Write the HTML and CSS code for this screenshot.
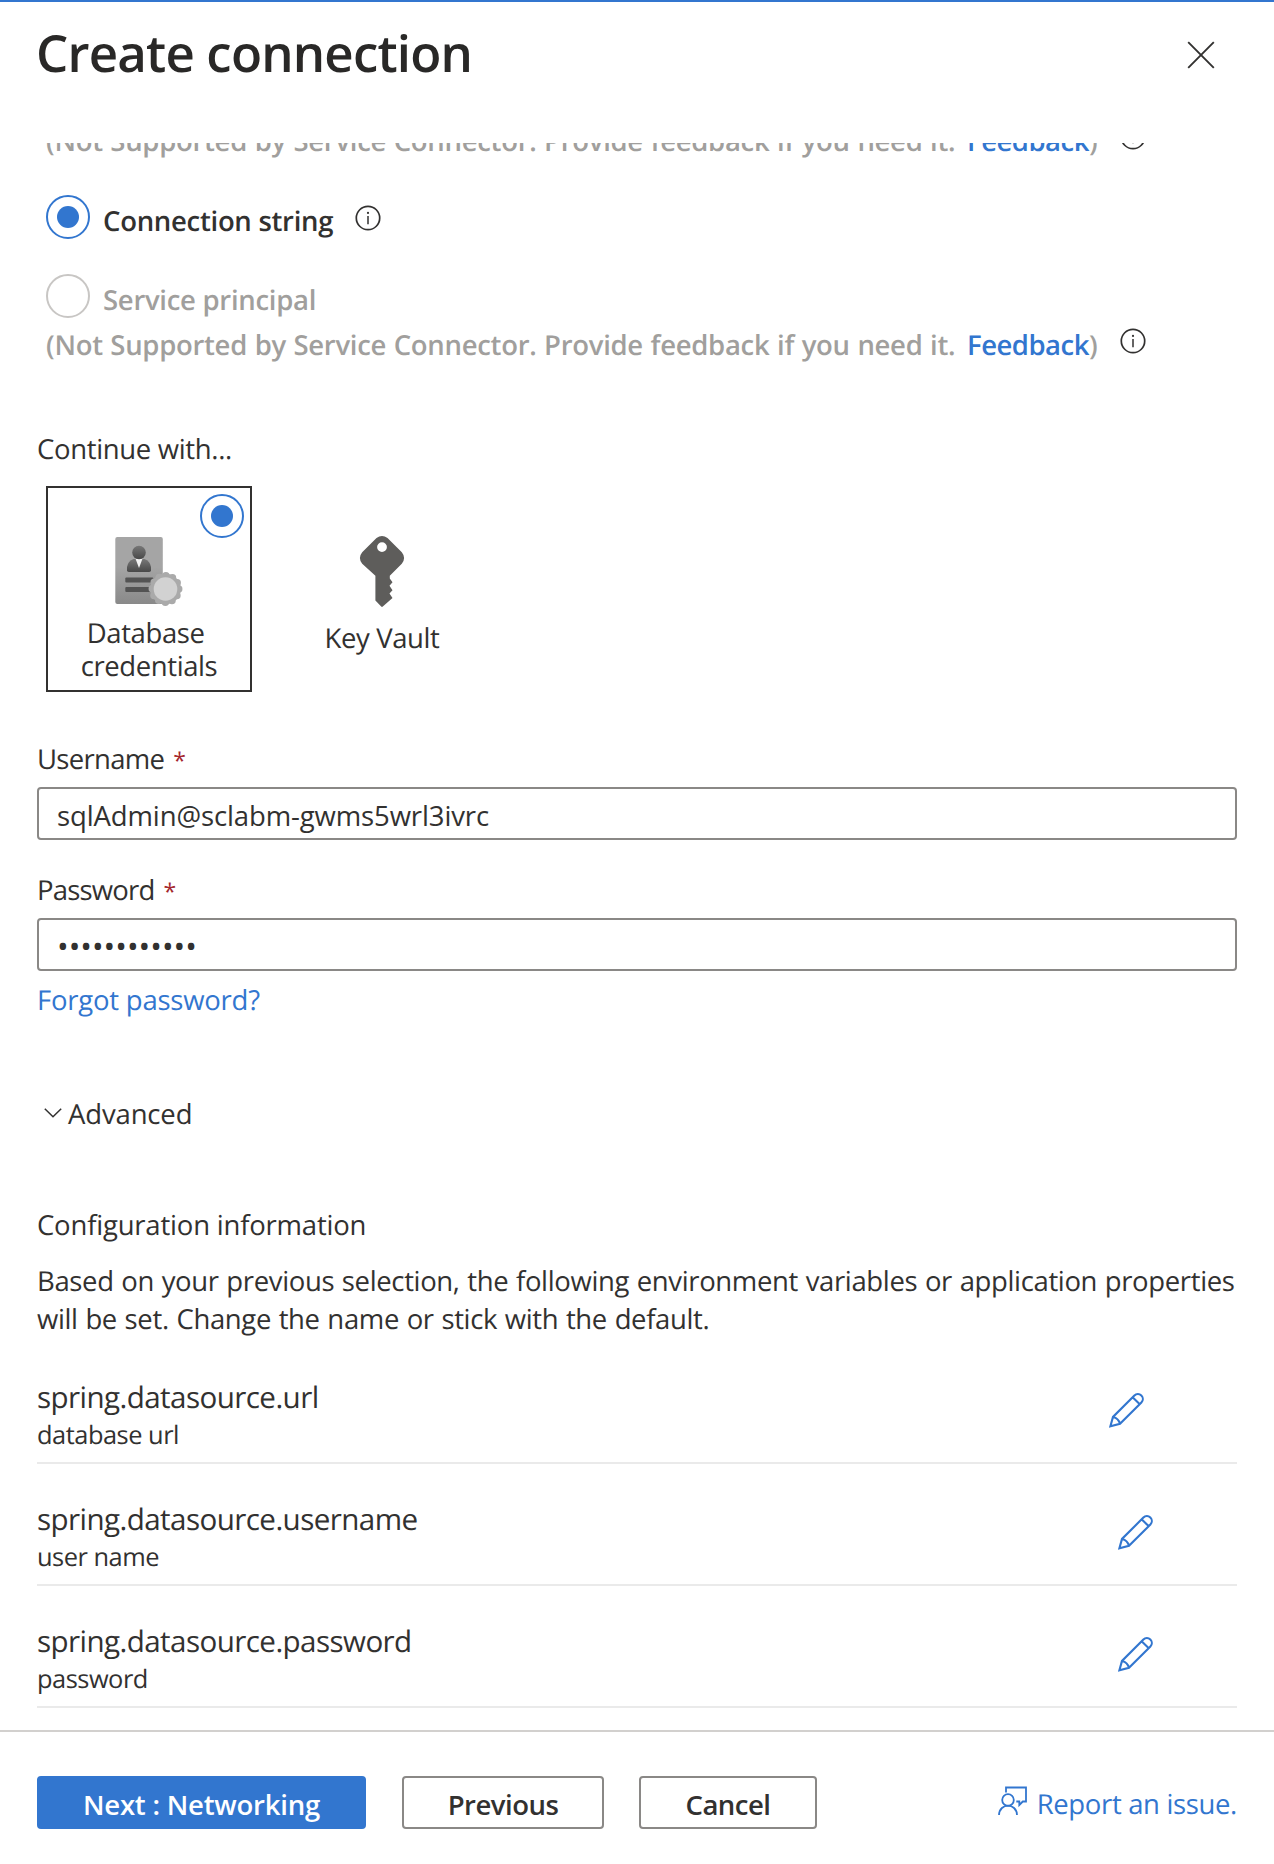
FILE: index.html
```html
<!DOCTYPE html>
<html lang="en">
<head>
<meta charset="utf-8">
<title>Create connection</title>
<link rel="stylesheet" href="styles.css">
</head>
<body>
<svg class="defs" width="0" height="0" aria-hidden="true">
  <symbol id="info" viewBox="0 0 26 26">
    <circle cx="13" cy="13" r="11.7" fill="none" stroke="#323130" stroke-width="1.7"/>
    <path d="M13 11v8.2" stroke="#323130" stroke-width="1.5"/>
    <circle cx="13" cy="7.9" r="1.1" fill="#323130"/>
  </symbol>
  <symbol id="pencil" viewBox="0 0 36 36">
    <path d="M1.4 34.2 4 24.9 25.4 3.6A4.9 4.9 0 0 1 32.4 10.5L11 31.8ZM23.6 5.3 30.8 12.3M4 24.9Q9.600 26.2 11 31.8" fill="none" stroke="#3276cf" stroke-width="2.1"/>
  </symbol>
</svg>

<div class="panel">
  <header class="header">
    <h1 class="title">Create connection</h1>
    <svg class="close" width="28" height="28" viewBox="0 0 28 28"><path d="M1.200 1.200 26.800 26.800M26.800 1.200 1.200 26.800" stroke="#323130" stroke-width="1.9"/></svg>
  </header>

  <main class="content">
    <div class="note note-first">
      <span class="note-text">(Not Supported by Service Connector. Provide feedback if you need it.</span>
      <a class="note-link">Feedback</a><span>)</span>
      <svg class="info" width="26" height="26"><use href="#info"/></svg>
    </div>

    <div class="option option-first">
      <span class="radio radio-on"></span>
      <span class="option-label">Connection string</span>
      <svg class="info" width="26" height="26"><use href="#info"/></svg>
    </div>

    <div class="option option-disabled">
      <span class="radio"></span>
      <span class="option-label">Service principal</span>
    </div>
    <div class="note">
      <span class="note-text">(Not Supported by Service Connector. Provide feedback if you need it.</span>
      <a class="note-link">Feedback</a><span>)</span>
      <svg class="info" width="26" height="26"><use href="#info"/></svg>
    </div>

    <p class="label continue">Continue with...</p>
    <div class="tiles">
      <div class="tile tile-on">
        <span class="radio radio-on tile-radio"></span>
        <svg class="tile-icon" width="70" height="70" viewBox="0 0 70 70">
          <defs>
            <linearGradient id="page" x2="0" y2="1"><stop offset=".45" stop-color="#a5a5a5"/><stop offset="1" stop-color="#898989"/></linearGradient>
            <linearGradient id="head" x2="0" y2="1"><stop stop-color="#777"/><stop offset="1" stop-color="#484848"/></linearGradient>
          </defs>
          <rect x="1.300" y="1" width="47.500" height="67" rx="2" fill="url(#page)"/>
          <path d="M13 34.200V31Q14 25 19.500 23H30.500Q36 25 37 31V34.200Q37 36 35.200 36H14.800Q13 36 13 34.200Z" fill="url(#head)"/>
          <path d="M21.600 23H28.400L25 32Z" fill="#f2f2f2"/>
          <circle cx="25" cy="16.500" r="6.800" fill="url(#head)"/>
          <rect x="11.300" y="41.500" width="28" height="5" rx="1" fill="#535353"/>
          <rect x="11.300" y="51" width="26" height="5" rx="1" fill="#535353"/>
          <circle cx="51.500" cy="53" r="15.300" fill="#aaa"/>
          <circle cx="51.500" cy="53" r="13.200" fill="none" stroke="#aaa" stroke-width="7.500" stroke-linecap="round" stroke-dasharray="0 6.911"/>
          <circle cx="51.500" cy="53" r="11.800" fill="#d2d2d2"/>
        </svg>
        <span class="tile-label">Database&nbsp;<br>credentials</span>
      </div>
      <div class="tile">
        <svg class="tile-icon key" width="48" height="74" viewBox="0 0 48 74">
          <path fill="#5e5d5b" fill-rule="evenodd" d="M18.500 4Q24-.2 29.500 4L43.800 18.300Q48.400 24 43.800 29.700L31.800 41.700V44.500L34.500 48.300 31.500 51.800 34.500 56.200 31.500 59.500 34.500 64 24.800 72.600Q24 73.200 23.200 72.600L17.400 66.500V41.700L4.200 29.700Q-.4 24 4.200 18.300ZM24 8.200A4.900 4.900 0 1 0 24 18 4.900 4.900 0 1 0 24 8.200Z"/>
        </svg>
        <span class="tile-label">Key Vault</span>
      </div>
    </div>

    <label class="label username-label">Username<span class="required">*</span></label>
    <input class="input" type="text" value="sqlAdmin@sclabm-gwms5wrl3ivrc">
    <label class="label password-label">Password<span class="required">*</span></label>
    <input class="input input-password" type="password" value="connectordb1">
    <a class="label forgot">Forgot password?</a>

    <div class="advanced">
      <svg width="18" height="10" viewBox="0 0 18 10"><path d="M.8.8 9 8.800 17.200.8" fill="none" stroke="#323130" stroke-width="1.500"/></svg>
      <span>Advanced</span>
    </div>

    <p class="label config">Configuration information</p>
    <p class="label description">Based on your previous selection, the following environment variables or application properties<br>will be set. Change the name or stick with the default.</p>

    <ul class="variables">
      <li class="variable">
        <div><div class="variable-name">spring.datasource.url</div><div class="variable-hint">database url</div></div>
        <svg class="edit edit-wide" width="36" height="36"><use href="#pencil"/></svg>
      </li>
      <li class="variable">
        <div><div class="variable-name">spring.datasource.username</div><div class="variable-hint">user name</div></div>
        <svg class="edit" width="36" height="36"><use href="#pencil"/></svg>
      </li>
      <li class="variable">
        <div><div class="variable-name">spring.datasource.password</div><div class="variable-hint">password</div></div>
        <svg class="edit" width="36" height="36"><use href="#pencil"/></svg>
      </li>
    </ul>
  </main>

  <footer class="footer">
    <button class="button button-primary">Next : Networking</button>
    <button class="button button-previous">Previous</button>
    <button class="button button-cancel">Cancel</button>
    <a class="report">
      <svg width="30" height="30" viewBox="0 0 30 30" fill="none" stroke="#3276cf" stroke-width="1.800"><circle cx="10" cy="14" r="5.800"/><path d="M1 29C1.500 16.500 18.500 16.500 19 29M8 6.500V1.500H28V15.500H24.800L21.300 19V15.500H18.300"/></svg>
      <span>Report an issue.</span>
    </a>
  </footer>
</div>
</body>
</html>
```
FILE: styles.css
```css
* { box-sizing: border-box; }

body {
  margin: 0;
  background: #fff;
  color: #323130;
  font: 27.5px/38px "Open Sans", "Noto Sans", sans-serif;
  letter-spacing: -0.23px;
  text-rendering: geometricPrecision;
}

p, h1, ul { margin: 0; padding: 0; }
svg { display: block; flex: none; }
.defs { position: absolute; }

.panel {
  display: flex;
  flex-direction: column;
  height: 1864px;
  border-top: 2px solid #3276cf;
}

.header {
  display: flex;
  justify-content: space-between;
  height: 141px;
  padding: 15px 59px 0 36px;
}
.title {
  font-size: 51px;
  font-weight: 600;
  line-height: 70px;
  letter-spacing: -0.82px;
  color: #292827;
}
.close { margin-top: 24px; }

.content {
  height: 1587px;
  padding: 0 37px;
  overflow: hidden;
}

.note {
  display: flex;
  height: 38px;
  margin-top: 9px;
  padding-left: 9px;
  color: #a19f9d;
  font-weight: 600;
  white-space: nowrap;
  letter-spacing: -0.5px;
}
.note-first { margin-top: -20px; }
.note-text { width: 921px; letter-spacing: -0.3px; word-spacing: 0.8px; }
.note-link { color: #3276cf; }
.note .info { margin: 1px 0 0 23px; }

.option { display: flex; height: 44px; margin-top: 35px; padding-left: 9px; font-weight: 600; letter-spacing: -0.29px; }
.option-first { margin-top: 34px; }
.option-label { margin-left: 13px; padding-top: 5px; line-height: 44px; }
.option .info { margin: 10px 0 0 22px; }
.option-disabled { color: #a19f9d; }
.option-disabled .radio { border-color: #c8c6c4; }

.radio {
  display: flex;
  flex: none;
  align-items: center;
  justify-content: center;
  width: 44px;
  height: 44px;
  border: 2px solid #3276cf;
  border-radius: 50%;
}
.radio-on::after { content: ""; width: 22px; height: 22px; border-radius: 50%; background: #3276cf; }

.label { display: block; }
.continue { margin-top: 66px; letter-spacing: -0.34px; }

.tiles { display: flex; gap: 27px; margin: 17px 0 0 9px; letter-spacing: -0.4px; }
.tile {
  position: relative;
  display: flex;
  flex-direction: column;
  align-items: center;
  width: 206px;
  height: 206px;
  padding-top: 48px;
  border: 2px solid transparent;
  text-align: center;
  line-height: 33px;
}
.tile-on { border-color: #323130; }
.tile-radio { position: absolute; top: 6px; right: 6px; }
.tile-label { margin-top: 11px; }
.key { margin-top: -2px; }
.key + .tile-label { margin-top: 14px; }

.required { margin-left: 9px; color: #a4262c; font-size: 23px; line-height: 20px; }
.username-label { margin-top: 49px; letter-spacing: -0.7px; }
.password-label { margin-top: 32px; letter-spacing: -0.8px; }
.input {
  display: block;
  width: 100%;
  height: 53px;
  margin-top: 8px;
  padding: 4px 18px 0;
  border: 2px solid #8a8886;
  border-radius: 4px;
  background: #fff;
  color: #323130;
  font: inherit;
  letter-spacing: -0.12px;
  outline: 0;
}
.input-password { padding-top: 3px; font-size: 31px; letter-spacing: 0px; }
.forgot { margin-top: 11px; color: #3276cf; }

.advanced { display: flex; margin: 76px 0 0 7px; letter-spacing: -0.15px; }
.advanced svg { margin: 12px 6px 0 0; }

.config { margin-top: 73px; letter-spacing: -0.2px; }
.description { margin-top: 18px; white-space: nowrap; letter-spacing: -0.36px; word-spacing: 0.9px; }

.variables { margin-top: 3px; list-style: none; }
.variable {
  display: flex;
  justify-content: space-between;
  height: 122px;
  padding-top: 35px;
  border-bottom: 2px solid #eaeaea;
}
.variable-name { font-size: 29.6px; line-height: 40px; letter-spacing: -0.58px; }
.variable-hint { margin-top: 2px; font-size: 25.4px; line-height: 32px; letter-spacing: -0.48px; }
.edit { margin: 15px 83px 0 0; }
.edit-wide { margin-right: 92px; }

.footer {
  display: flex;
  height: 134px;
  padding: 44px 37px 0;
  border-top: 2px solid #d2d0ce;
}
.button {
  height: 53px;
  padding: 4px 0 0;
  border: 2px solid #8a8886;
  border-radius: 4px;
  background: #fff;
  color: #323130;
  font: inherit;
  font-weight: 600;
  line-height: 38px;
  letter-spacing: -0.5px;
}
.button-primary { width: 329px; border-color: #3276cf; background: #3276cf; color: #fff; letter-spacing: -0.21px; }
.button-previous { width: 202px; margin-left: 36px; }
.button-cancel { width: 178px; margin-left: 35px; }
.report { display: flex; gap: 9px; margin-left: auto; color: #3276cf; letter-spacing: -0.35px; }
.report svg { margin-top: 10px; }
.report span { margin-top: 10px; }
```
